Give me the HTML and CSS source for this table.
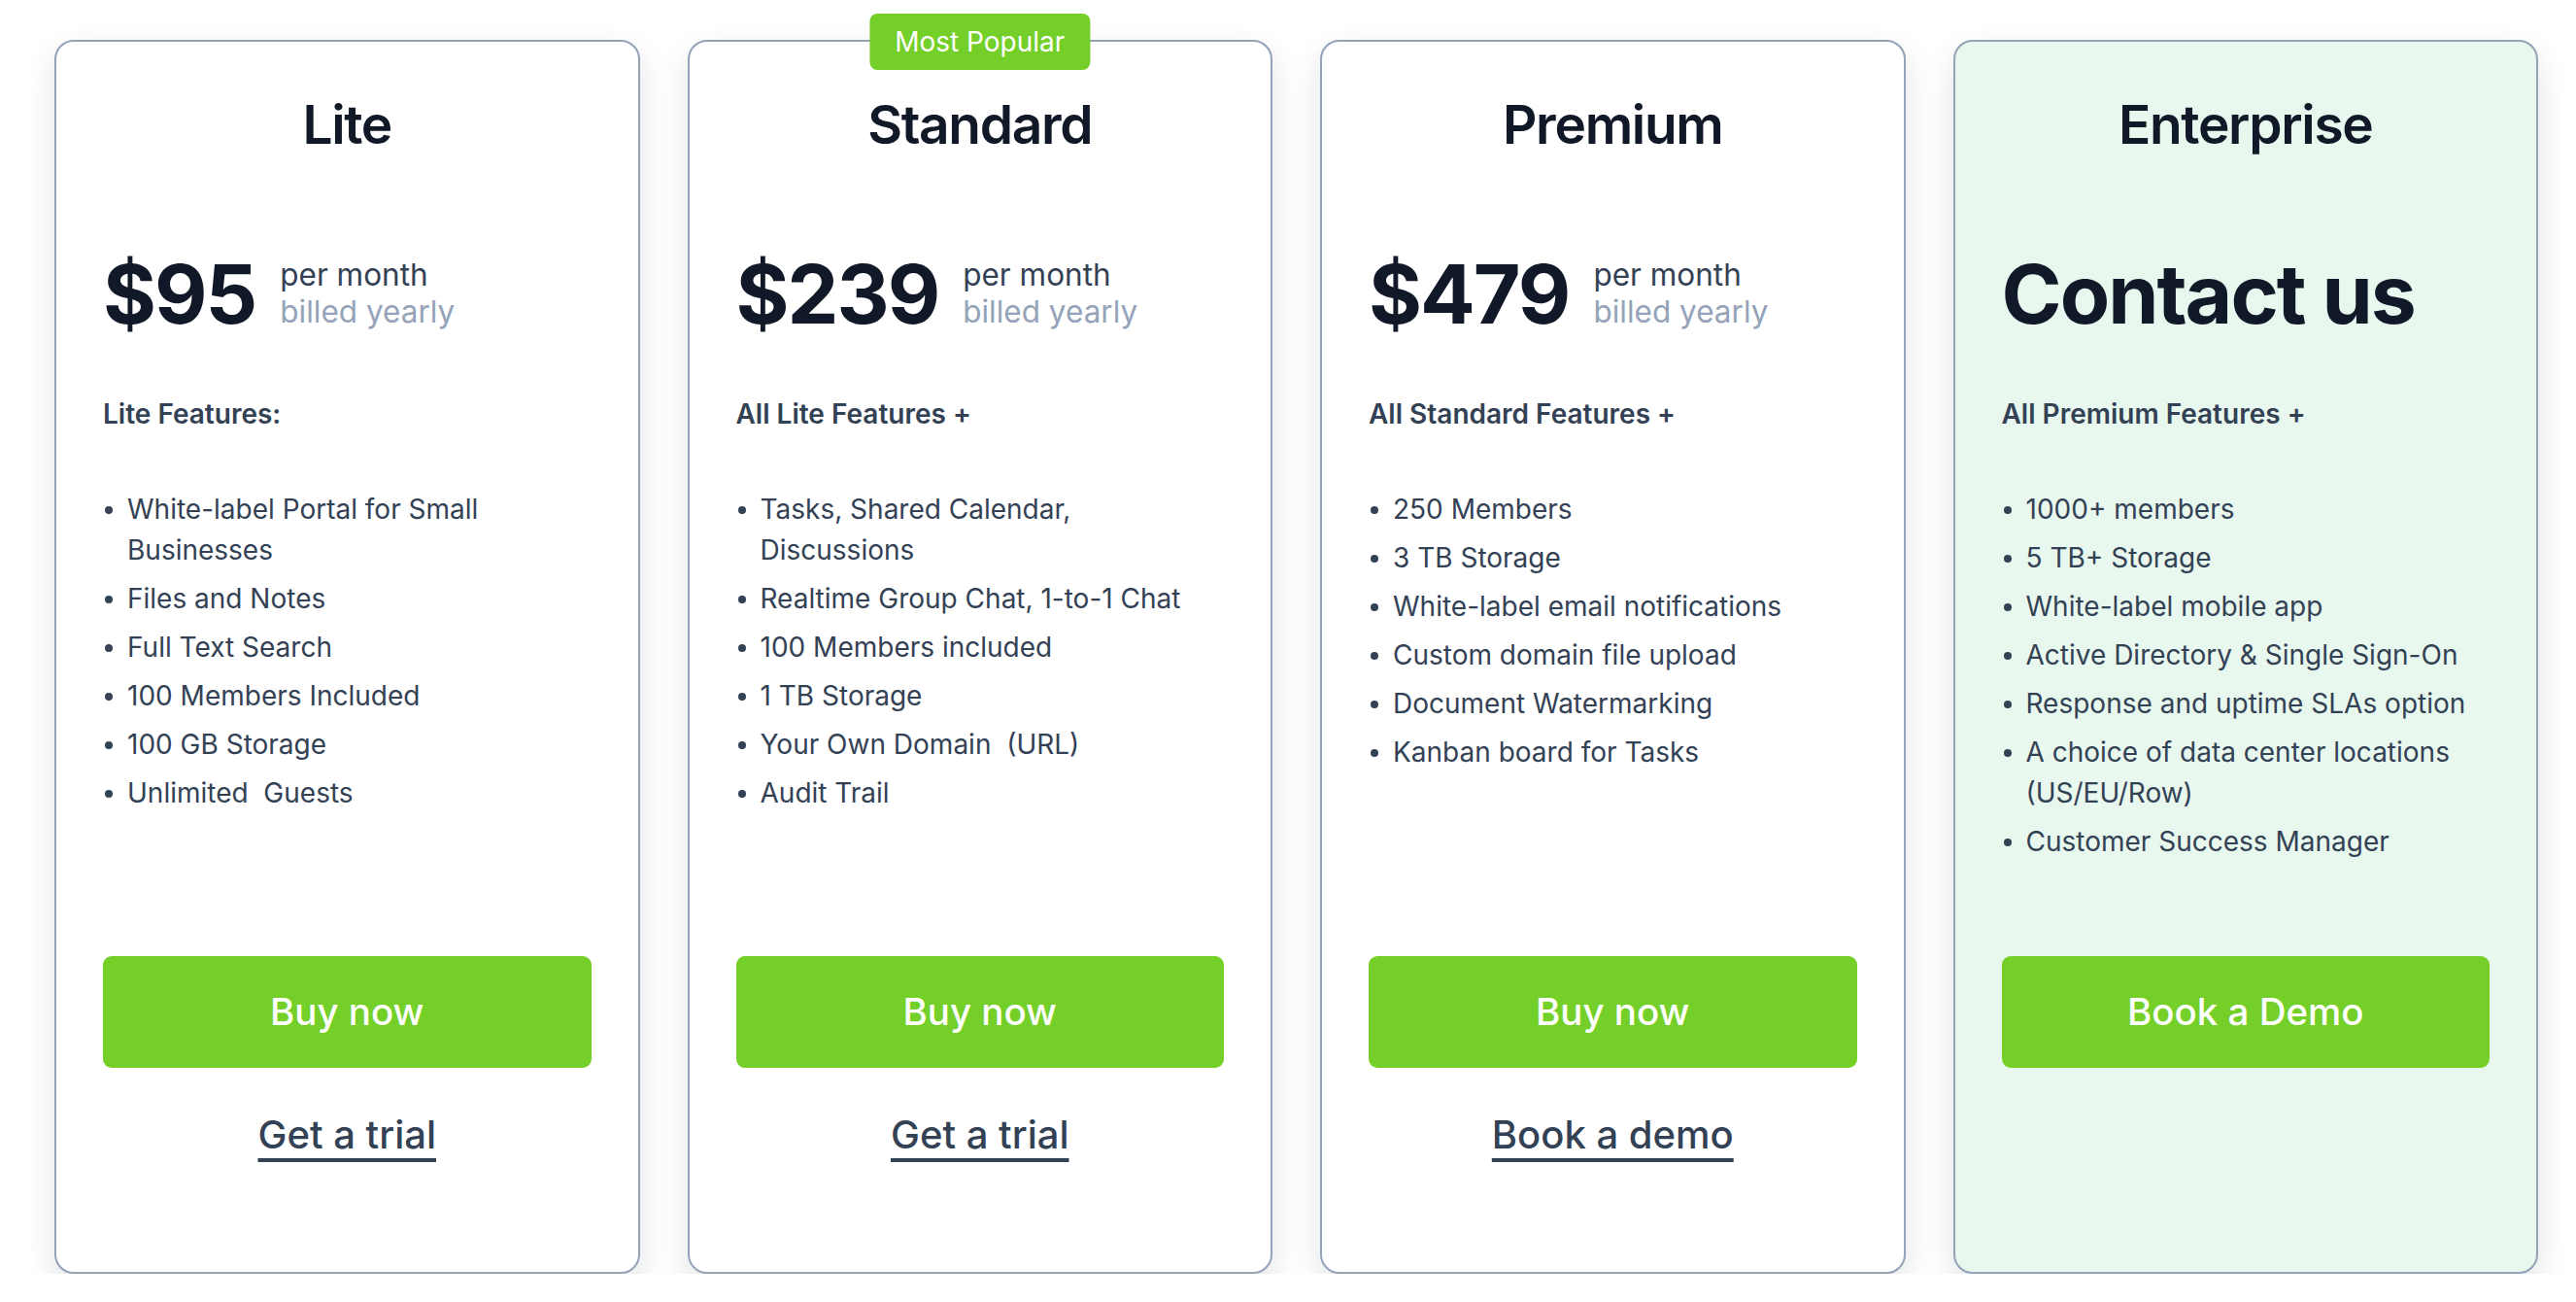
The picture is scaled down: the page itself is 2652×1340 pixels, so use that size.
FILE: index.html
```html
<!DOCTYPE html>
<html lang="en">
<head>
    <meta charset="UTF-8">
    <meta name="viewport" content="width=device-width, initial-scale=1.0">
    <title>Pricing</title>
    <link rel="stylesheet" href="styles.css">
</head>
<body>
    <div class="plans">
        <div class="plan">
            <h2 class="plan-name">Lite</h2>
            <div class="price">
                <span class="amount">$95</span>
                <div class="period">
                    <span>per month</span>
                    <span class="billed">billed yearly</span>
                </div>
            </div>
            <div class="features">
                <h3>Lite Features:</h3>
                <ul>
                    <li>White-label Portal for Small Businesses</li>
                    <li>Files and Notes</li>
                    <li>Full Text Search</li>
                    <li>100 Members Included</li>
                    <li>100 GB Storage</li>
                    <li>Unlimited &nbsp;Guests</li>
                </ul>
            </div>
            <div class="actions">
                <a class="btn" href="#">Buy now</a>
                <div class="secondary"><a href="#">Get a trial</a></div>
            </div>
        </div>

        <div class="plan">
            <span class="badge">Most Popular</span>
            <h2 class="plan-name">Standard</h2>
            <div class="price">
                <span class="amount">$239</span>
                <div class="period">
                    <span>per month</span>
                    <span class="billed">billed yearly</span>
                </div>
            </div>
            <div class="features">
                <h3>All Lite Features +</h3>
                <ul>
                    <li>Tasks, Shared Calendar, Discussions</li>
                    <li>Realtime Group Chat, 1-to-1 Chat</li>
                    <li>100 Members included</li>
                    <li>1 TB Storage</li>
                    <li>Your Own Domain &nbsp;(URL)</li>
                    <li>Audit Trail</li>
                </ul>
            </div>
            <div class="actions">
                <a class="btn" href="#">Buy now</a>
                <div class="secondary"><a href="#">Get a trial</a></div>
            </div>
        </div>

        <div class="plan">
            <h2 class="plan-name">Premium</h2>
            <div class="price">
                <span class="amount">$479</span>
                <div class="period">
                    <span>per month</span>
                    <span class="billed">billed yearly</span>
                </div>
            </div>
            <div class="features">
                <h3>All Standard Features +</h3>
                <ul>
                    <li>250 Members</li>
                    <li>3 TB Storage</li>
                    <li>White-label email notifications</li>
                    <li>Custom domain file upload</li>
                    <li>Document Watermarking</li>
                    <li>Kanban board for Tasks</li>
                </ul>
            </div>
            <div class="actions">
                <a class="btn" href="#">Buy now</a>
                <div class="secondary"><a href="#">Book a demo</a></div>
            </div>
        </div>

        <div class="plan enterprise">
            <h2 class="plan-name">Enterprise</h2>
            <div class="price">
                <span class="amount">Contact us</span>
            </div>
            <div class="features">
                <h3>All Premium Features +</h3>
                <ul>
                    <li>1000+ members</li>
                    <li>5 TB+ Storage</li>
                    <li>White-label mobile app</li>
                    <li>Active Directory &amp; Single Sign-On</li>
                    <li>Response and uptime SLAs option</li>
                    <li>A choice of data center locations (US/EU/Row)</li>
                    <li>Customer Success Manager</li>
                </ul>
            </div>
            <div class="actions">
                <a class="btn" href="#">Book a Demo</a>
                <div class="secondary"></div>
            </div>
        </div>
    </div>
</body>
</html>
```

FILE: styles.css
```css
body, html {
    margin: 0;
    padding: 0;
    font-family: 'Inter', 'Noto Sans', sans-serif;
    color: #334155;
    background: #ffffff;
}
.plans {
    display: grid;
    grid-template-columns: repeat(4, 1fr);
    gap: 49px;
    padding: 41px 39px 0 56px;
}
.plan {
    position: relative;
    display: flex;
    flex-direction: column;
    padding: 52px 48px 0;
    border: 2px solid #94a3b8;
    border-radius: 20px;
    background: #ffffff;
    box-shadow: 0 14px 32px rgba(15, 23, 42, 0.12);
}
.plan.enterprise {
    background: #e8f8ee;
}
.badge {
    position: absolute;
    top: 0;
    left: 50%;
    transform: translate(-50%, -50%);
    padding: 8px 26px;
    border-radius: 8px;
    background: #75cf29;
    color: #fff;
    font-size: 28px;
    line-height: 42px;
    white-space: nowrap;
}
.plan-name {
    margin: 0;
    text-align: center;
    font-size: 55px;
    line-height: 66px;
    font-weight: 600;
    color: #111827;
    letter-spacing: -1.3px;
}
.price {
    display: flex;
    align-items: center;
    gap: 25px;
    margin-top: 100px;
    height: 84px;
}
.amount {
    font-size: 84px;
    line-height: 84px;
    font-weight: 700;
    color: #111827;
    letter-spacing: -2px;
}
.period {
    display: flex;
    flex-direction: column;
    margin-top: -3px;
    font-size: 31.5px;
    line-height: 38px;
    color: #334155;
}
.billed {
    color: #94a3b8;
}
.features {
    flex: 1;
    margin-top: 60px;
}
.features h3 {
    margin: 0;
    font-size: 28px;
    line-height: 42px;
    font-weight: 600;
    color: #334155;
}
.features ul {
    list-style: none;
    margin: 56px 0 0;
    padding: 0 20px 0 0;
}
.features li {
    display: flex;
    gap: 15px;
    font-size: 28px;
    line-height: 42px;
    margin-bottom: 8px;
}
.features li::before {
    content: '';
    flex: none;
    width: 8px;
    height: 8px;
    margin-top: 18px;
    margin-left: 2px;
    border-radius: 50%;
    background: #334155;
}
.actions {
    margin-top: 89px;
}
.btn {
    display: block;
    height: 115px;
    line-height: 115px;
    border-radius: 9px;
    background: #75cf29;
    color: #fff;
    text-align: center;
    text-decoration: none;
    font-size: 38.5px;
    font-weight: 500;
}
.secondary {
    height: 210px;
    padding-top: 46px;
    box-sizing: border-box;
    text-align: center;
}
.secondary a {
    font-size: 40px;
    line-height: 46px;
    font-weight: 500;
    color: #334155;
    text-decoration: underline;
    text-decoration-thickness: 4px;
    text-underline-offset: 10px;
}
```
